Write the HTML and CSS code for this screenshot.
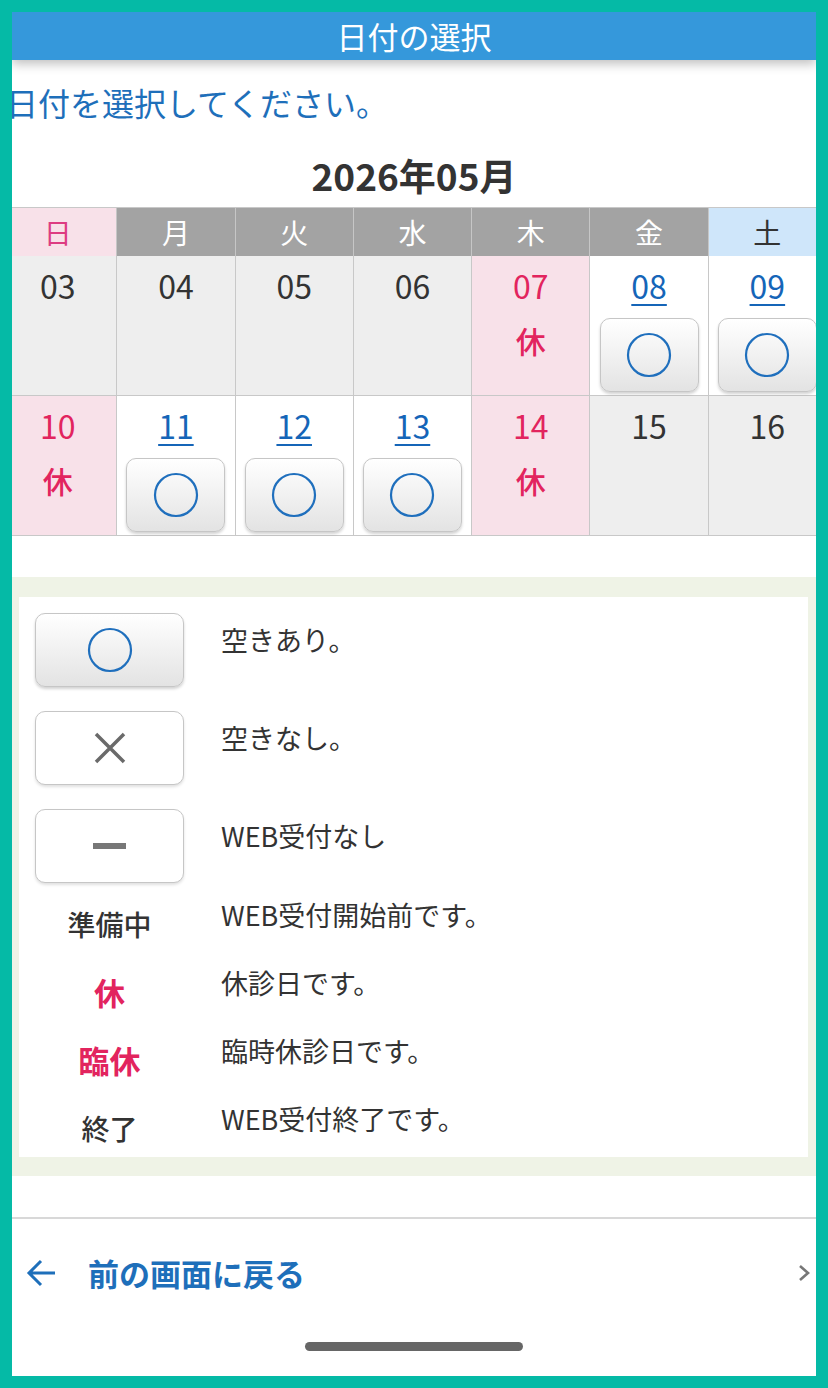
FILE: index.html
```html
<!DOCTYPE html>
<html lang="ja">
<head>
    <meta charset="UTF-8">
    <meta name="viewport" content="width=device-width, initial-scale=1.0">
    <title>日付の選択</title>
    <link rel="stylesheet" href="styles.css">
</head>
<body>

    <div class="screen">
        <!-- top bar -->
        <header class="app-bar">日付の選択</header>

        <p class="lead">日付を選択してください。</p>

        <h2 class="month">2026年05月</h2>

        <!-- calendar: one week per row -->
        <div class="calendar">
            <div class="wday sun">日</div>
            <div class="wday">月</div>
            <div class="wday">火</div>
            <div class="wday">水</div>
            <div class="wday">木</div>
            <div class="wday">金</div>
            <div class="wday sat">土</div>

            <div class="day past"><span class="num">03</span></div>
            <div class="day past"><span class="num">04</span></div>
            <div class="day past"><span class="num">05</span></div>
            <div class="day past"><span class="num">06</span></div>
            <div class="day holiday"><span class="num">07</span><span class="off">休</span></div>
            <div class="day open">
                <a class="num" href="#">08</a>
                <button class="slot" type="button"><svg viewBox="0 0 46 46" width="46" height="46"><circle cx="23" cy="23" r="21" /></svg></button>
            </div>
            <div class="day open">
                <a class="num" href="#">09</a>
                <button class="slot" type="button"><svg viewBox="0 0 46 46" width="46" height="46"><circle cx="23" cy="23" r="21" /></svg></button>
            </div>

            <div class="day holiday"><span class="num">10</span><span class="off">休</span></div>
            <div class="day open">
                <a class="num" href="#">11</a>
                <button class="slot" type="button"><svg viewBox="0 0 46 46" width="46" height="46"><circle cx="23" cy="23" r="21" /></svg></button>
            </div>
            <div class="day open">
                <a class="num" href="#">12</a>
                <button class="slot" type="button"><svg viewBox="0 0 46 46" width="46" height="46"><circle cx="23" cy="23" r="21" /></svg></button>
            </div>
            <div class="day open">
                <a class="num" href="#">13</a>
                <button class="slot" type="button"><svg viewBox="0 0 46 46" width="46" height="46"><circle cx="23" cy="23" r="21" /></svg></button>
            </div>
            <div class="day holiday"><span class="num">14</span><span class="off">休</span></div>
            <div class="day past"><span class="num">15</span></div>
            <div class="day past"><span class="num">16</span></div>
        </div>

        <!-- legend for the marks used above -->
        <section class="legend">
            <div class="legend-box">
                <div class="legend-row icon-row">
                    <div class="mark slot"><svg viewBox="0 0 46 46" width="46" height="46"><circle cx="23" cy="23" r="21" /></svg></div>
                    <p class="desc">空きあり。</p>
                </div>
                <div class="legend-row icon-row">
                    <div class="mark plain">
                        <svg class="cross" viewBox="0 0 32 32" width="32" height="32"><path d="M2 2 L30 30 M30 2 L2 30" /></svg>
                    </div>
                    <p class="desc">空きなし。</p>
                </div>
                <div class="legend-row icon-row last-icon">
                    <div class="mark plain"><span class="dash"></span></div>
                    <p class="desc">WEB受付なし</p>
                </div>
                <div class="legend-row">
                    <p class="label">準備中</p>
                    <p class="desc">WEB受付開始前です。</p>
                </div>
                <div class="legend-row">
                    <p class="label red">休</p>
                    <p class="desc">休診日です。</p>
                </div>
                <div class="legend-row">
                    <p class="label red">臨休</p>
                    <p class="desc">臨時休診日です。</p>
                </div>
                <div class="legend-row">
                    <p class="label">終了</p>
                    <p class="desc">WEB受付終了です。</p>
                </div>
            </div>
        </section>

        <!-- back link -->
        <a class="back" href="#">
            <svg class="back-arrow" viewBox="0 0 30 28" width="30" height="28"><path d="M3 14 H29 M15 2 L3 14 L15 26" /></svg>
            <span>前の画面に戻る</span>
            <svg class="chevron" viewBox="0 0 14 18" width="14" height="18"><path d="M3 2 L11 9 L3 16" /></svg>
        </a>

        <div class="home-bar"></div>
    </div>

</body>
</html>
```

FILE: styles.css
```css
/* General styling */
body {
    margin: 0;
    background-color: #05baa6;
    font-family: "Noto Sans CJK JP", "Noto Sans", sans-serif;
    color: #333;
}

p, h2 {
    margin: 0;
}

/* phone screen inside the teal frame */
.screen {
    margin: 12px;
    height: 1364px;
    background-color: #fff;
    overflow: hidden;
    display: flex;
    flex-direction: column;
}

.app-bar {
    position: relative;
    z-index: 1;
    height: 48px;
    line-height: 48px;
    flex-shrink: 0;
    background-color: #3598db;
    color: #fff;
    font-size: 31px;
    text-align: center;
    box-shadow: 0 4px 10px rgba(0, 0, 0, 0.25);
}

.lead {
    margin: 21px 0 0 -6px;
    font-size: 32px;
    line-height: 42px;
    color: #1e6fba;
    white-space: nowrap;
}

.month {
    margin: 30px 0 10px;
    font-size: 37px;
    line-height: 44px;
    font-weight: bold;
    text-align: center;
    color: #333;
}

/* Calendar grid */
.calendar {
    display: grid;
    grid-template-columns: repeat(7, 1fr);
    width: 828px;
    margin-left: -13px;
    flex-shrink: 0;
    border-top: 1px solid #c8c8c8;
}

.wday {
    height: 48px;
    line-height: 48px;
    text-align: center;
    font-size: 28px;
    color: #fff;
    background-color: #a3a3a3;
    border-right: 1px solid #c6c6c6;
}

.wday.sun {
    background-color: #f8e1e9;
    color: #dd3c82;
}

.wday.sat {
    background-color: #cfe6fa;
    color: #333;
}

.day {
    height: 140px;
    box-sizing: border-box;
    padding-top: 9px;
    display: flex;
    flex-direction: column;
    align-items: center;
    border-right: 1px solid #c8c8c8;
    border-bottom: 1px solid #c8c8c8;
}

.day .num {
    font-size: 32px;
    line-height: 40px;
    color: #333;
}

.day.past {
    background-color: #eeeeee;
}

.day.holiday {
    background-color: #f8e1e9;
}

.day.holiday .num,
.day .off {
    color: #e2245e;
}

.day .off {
    margin-top: 15px;
    font-size: 30px;
    line-height: 40px;
    font-weight: 500;
}

.day.open {
    background-color: #fff;
}

.day.open .num {
    color: #1565b8;
    text-decoration: underline;
    text-decoration-thickness: 2px;
    text-underline-offset: 5px;
}

/* the round "available" button */
.slot {
    width: 99px;
    height: 74px;
    margin-top: 13px;
    padding: 0;
    display: flex;
    align-items: center;
    justify-content: center;
    border: 1px solid #c6c6c6;
    border-radius: 10px;
    background: linear-gradient(#ffffff, #e3e3e3);
    box-shadow: 0 2px 3px rgba(0, 0, 0, 0.18);
    box-sizing: border-box;
}

.slot circle {
    fill: none;
    stroke: #1f6fbd;
    stroke-width: 2.2;
}

/* Legend */
.legend {
    margin-top: 41px;
    padding: 20px 8px 19px 7px;
    background-color: #eff3e6;
    flex-shrink: 0;
}

.legend-box {
    background-color: #fff;
    padding: 16px 0 11px 16px;
}

.legend-row {
    display: grid;
    grid-template-columns: 149px 1fr;
    column-gap: 37px;
    align-items: start;
    margin-bottom: 23px;
}

.legend-row:last-child {
    margin-bottom: 0;
}

.icon-row {
    margin-bottom: 24px;
}

.icon-row.last-icon {
    margin-bottom: 14px;
}

.mark {
    width: 149px;
    height: 74px;
    margin-top: 0;
}

.mark.plain {
    display: flex;
    align-items: center;
    justify-content: center;
    border: 1px solid #c6c6c6;
    border-radius: 10px;
    background-color: #fff;
    box-shadow: 0 2px 3px rgba(0, 0, 0, 0.12);
    box-sizing: border-box;
}

.cross path {
    fill: none;
    stroke: #6a6a6a;
    stroke-width: 3.5;
}

.dash {
    width: 33px;
    height: 6px;
    background-color: #777;
}

.desc {
    padding-top: 9px;
    font-size: 27px;
    line-height: 36px;
    color: #333;
    white-space: nowrap;
}

.legend-row:not(.icon-row) .desc {
    padding-top: 0;
}

.label {
    padding-top: 9px;
    font-size: 28px;
    line-height: 36px;
    font-weight: 500;
    text-align: center;
    color: #333;
}

.label.red {
    font-size: 31px;
    font-weight: bold;
    color: #e2245e;
}

/* back link at the bottom */
.back {
    margin-top: 41px;
    padding: 34px 0 0 14px;
    display: flex;
    align-items: center;
    border-top: 2px solid #d8d8d8;
    text-decoration: none;
    color: #1e6fba;
    font-size: 31px;
    line-height: 40px;
    font-weight: bold;
}

.back-arrow path {
    fill: none;
    stroke: #1e6fba;
    stroke-width: 3;
}

.back span {
    margin-left: 32px;
}

.chevron {
    margin-left: auto;
    margin-right: 5px;
}

.chevron path {
    fill: none;
    stroke: #777;
    stroke-width: 2.6;
}

.home-bar {
    width: 218px;
    height: 9px;
    margin: auto auto 25px;
    border-radius: 5px;
    background-color: #666;
}
```
